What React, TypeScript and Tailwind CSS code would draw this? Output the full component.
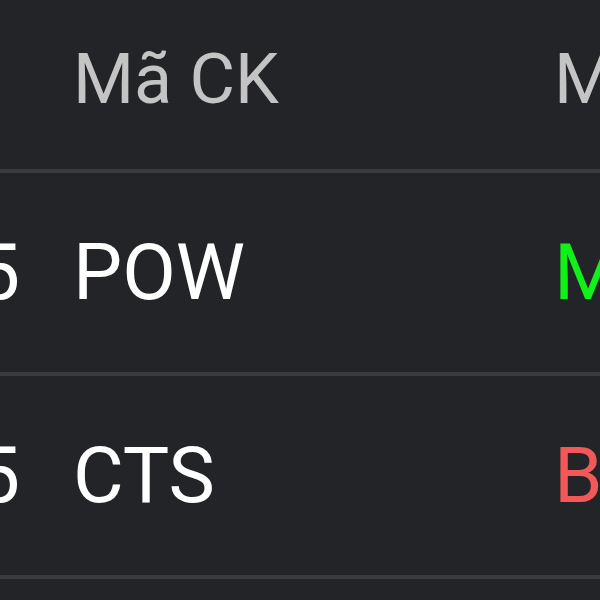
import React from "react";

const rows = [
  { n: "15", code: "POW", side: "Mua", color: "text-[#12f01a]" },
  { n: "15", code: "CTS", side: "Bán", color: "text-[#f25858]" },
  { n: "15", code: "SSI", side: "Mua", color: "text-[#12f01a]" },
];

export default function App() {
  return (
    <div
      className="w-[600px] h-[600px] overflow-hidden bg-[#232427] whitespace-nowrap"
      style={{ fontFamily: "Roboto, 'Noto Sans', sans-serif" }}
    >
      <div className="flex h-[169px] pt-[38px] text-[70px] leading-[82px] text-[#c4c4c4]">
        <div className="w-[20px] shrink-0" />
        <div className="w-[534px] shrink-0 pl-[53px]">Mã CK</div>
        <div className="shrink-0">Mua/Bán</div>
      </div>
      {rows.map((r, i) => (
        <div
          key={i}
          className="flex h-[203px] border-t-4 border-[#3a3b3e] text-[78px] leading-[199px] text-white"
        >
          <div className="w-[20px] shrink-0 flex justify-end">{r.n}</div>
          <div className="w-[534px] shrink-0 pl-[53px]">{r.code}</div>
          <div className={`shrink-0 ${r.color}`}>{r.side}</div>
        </div>
      ))}
    </div>
  );
}
